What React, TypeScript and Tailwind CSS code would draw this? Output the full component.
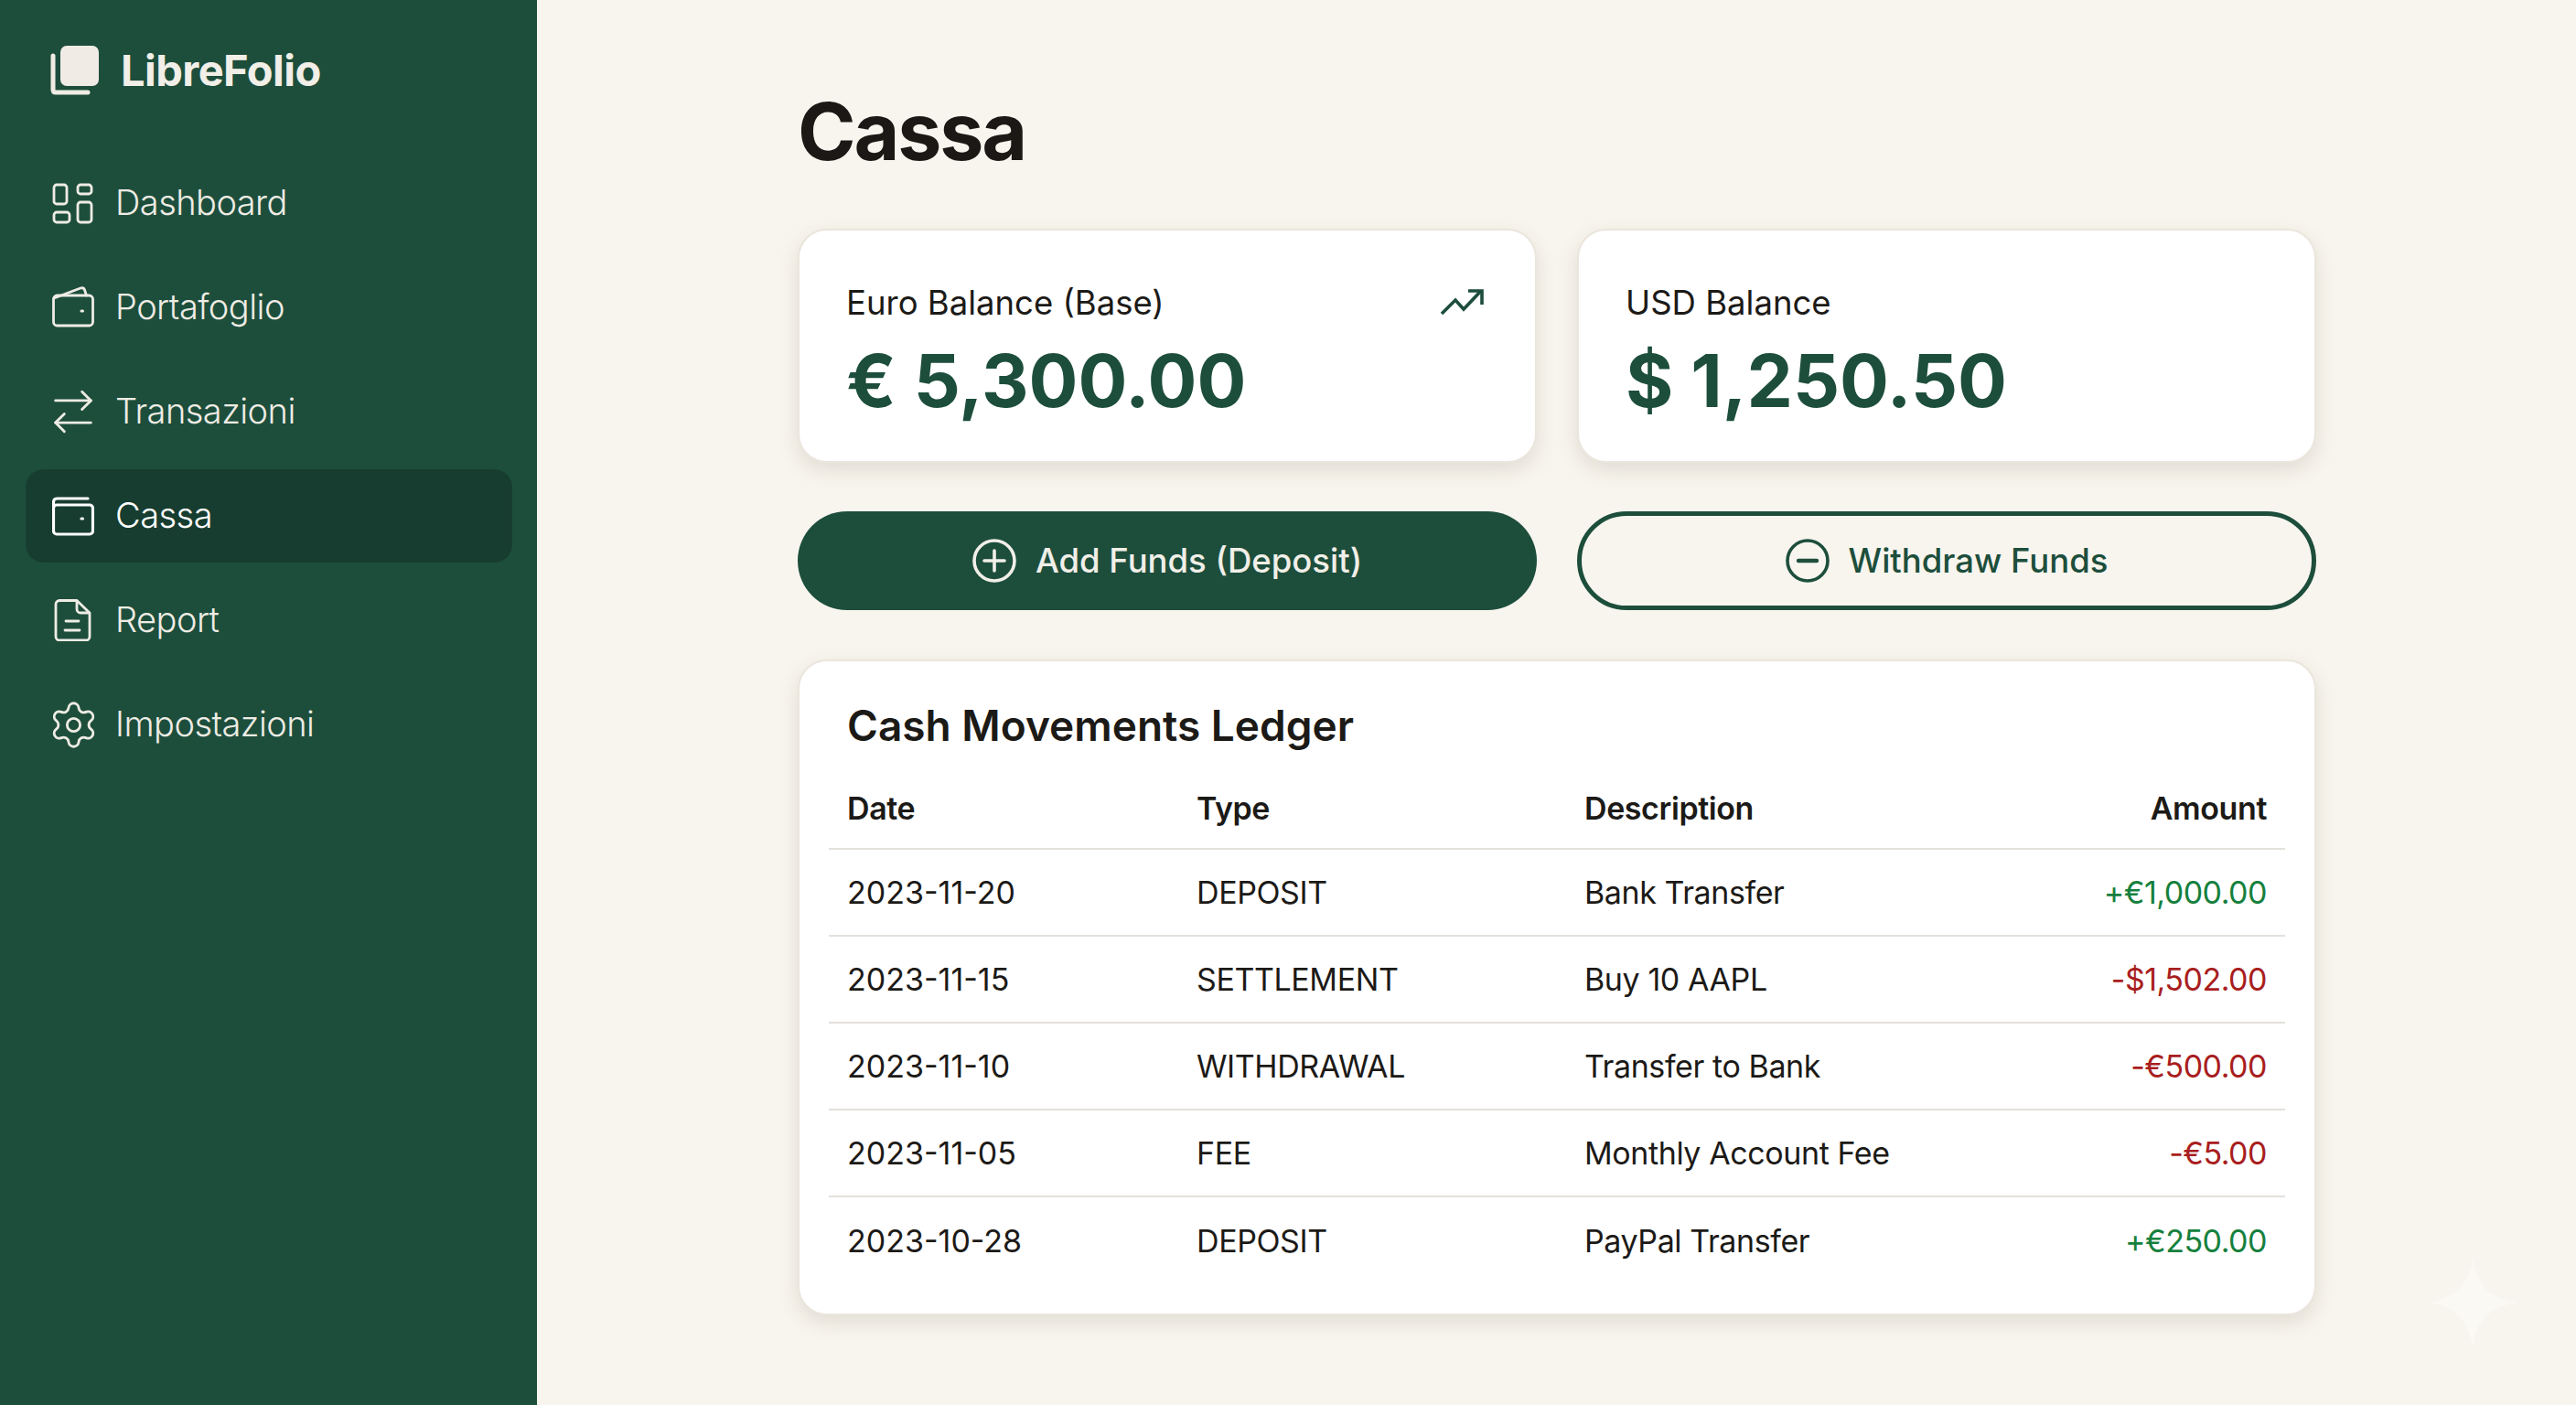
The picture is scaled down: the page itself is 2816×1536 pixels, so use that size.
import React from 'react';
import { ArrowRightLeft, Settings } from 'lucide-react';

const stroke = { fill: 'none', stroke: 'currentColor', strokeLinecap: 'round', strokeLinejoin: 'round' } as const;

function DashboardIcon() {
  return (
    <svg width="46" height="46" viewBox="0 0 46 46" {...stroke} strokeWidth="2.8">
      <rect x="2" y="3" width="14" height="21" rx="3" />
      <rect x="28" y="3" width="15" height="10" rx="3" />
      <rect x="2" y="33" width="17" height="11" rx="3" />
      <rect x="28" y="22" width="15" height="22" rx="3" />
    </svg>
  );
}

function WalletIcon() {
  return (
    <svg width="46" height="46" viewBox="0 0 46 46" {...stroke} strokeWidth="2.8">
      <rect x="1.5" y="10" width="43" height="33" rx="4" />
      <path d="M2 13 L31 2 Q34.5 1 35.5 4 L37.5 10" />
      <path d="M32 27h1.5" strokeWidth="3" />
    </svg>
  );
}

function CashIcon() {
  return (
    <svg width="46" height="46" viewBox="0 0 46 46" {...stroke} strokeWidth="3.2">
      <rect x="1.5" y="11" width="43" height="32" rx="3.5" />
      <path d="M1.5 14 V8 Q1.5 4 6 4 H39" />
      <path d="M32 26h1.5" />
    </svg>
  );
}

function ReportIcon() {
  return (
    <svg width="46" height="46" viewBox="0 0 46 46" {...stroke} strokeWidth="2.8">
      <path d="M8 1.5 H27 L41 15 V41 a4 4 0 0 1 -4 4 H8 a4 4 0 0 1 -4 -4 V5.5 a4 4 0 0 1 4 -4z" />
      <path d="M27 2 V11 a4 4 0 0 0 4 4 H40" />
      <path d="M15 24 H29" />
      <path d="M14 34 H30" />
    </svg>
  );
}

function LogoMark() {
  return (
    <svg width="54" height="54" viewBox="0 0 54 54">
      <path d="M3 11 V48 Q3 51 6 51 H41" fill="none" stroke="#f0ece4" strokeWidth="5" strokeLinecap="round" />
      <rect x="11" y="0" width="42" height="44" rx="7" fill="#f1ebe5" />
    </svg>
  );
}

function TrendIcon() {
  return (
    <svg width="52" height="34" viewBox="0 0 52 34" {...stroke} strokeWidth="3.6" strokeLinecap="butt" strokeLinejoin="miter" className="mr-[3px] text-[#1d4e3c]">
      <path d="M4 29 L19 14 L28 24 L47 4" />
      <path d="M33 4 H48 V19" />
    </svg>
  );
}

function PlusCircle() {
  return (
    <svg width="48" height="48" viewBox="0 0 48 48" {...stroke} strokeWidth="3.6">
      <circle cx="24" cy="24" r="22" />
      <path d="M13 24H35M24 13V35" />
    </svg>
  );
}

function MinusCircle() {
  return (
    <svg width="48" height="48" viewBox="0 0 48 48" {...stroke} strokeWidth="3.6">
      <circle cx="24" cy="24" r="22" />
      <path d="M14 24H34" strokeWidth="4.4" />
    </svg>
  );
}

const navItems = [
  { label: 'Dashboard', icon: <DashboardIcon /> },
  { label: 'Portafoglio', icon: <WalletIcon /> },
  { label: 'Transazioni', icon: <ArrowRightLeft size={58} strokeWidth={1.2} className="shrink-0" /> },
  { label: 'Cassa', icon: <CashIcon />, active: true },
  { label: 'Report', icon: <ReportIcon /> },
  { label: 'Impostazioni', icon: <Settings size={57} strokeWidth={1.2} className="shrink-0" /> },
];

const movements = [
  { date: '2023-11-20', type: 'DEPOSIT', description: 'Bank Transfer', amount: '+€1,000.00', positive: true },
  { date: '2023-11-15', type: 'SETTLEMENT', description: 'Buy 10 AAPL', amount: '-$1,502.00', positive: false },
  { date: '2023-11-10', type: 'WITHDRAWAL', description: 'Transfer to Bank', amount: '-€500.00', positive: false },
  { date: '2023-11-05', type: 'FEE', description: 'Monthly Account Fee', amount: '-€5.00', positive: false },
  { date: '2023-10-28', type: 'DEPOSIT', description: 'PayPal Transfer', amount: '+€250.00', positive: true },
];

export default function App() {
  return (
    <div className="relative flex h-[1536px] w-[2816px] overflow-hidden bg-[#f8f5ee] [font-family:Inter,sans-serif] text-[#1c1a17]">
      {/* Sidebar */}
      <aside className="w-[587px] shrink-0 bg-[#1d4e3c] pt-[50px] text-[#eeece4]">
        <div className="flex h-[54px] items-center gap-[23px] pl-[55px]">
          <LogoMark />
          <span className="pb-[2px] text-[47px] leading-none font-bold tracking-[-0.012em] text-[#f1efe8]">LibreFolio</span>
        </div>
        <nav className="mt-[67px] flex flex-col gap-[12px] pr-[27px] pl-[28px]">
          {navItems.map((item) => (
            <div
              key={item.label}
              className={`flex h-[102px] items-center gap-[23px] rounded-[20px] pl-[29px] ${
                item.active ? 'bg-[#173d30] text-white' : ''
              }`}
            >
              <span className="flex h-[46px] w-[46px] shrink-0 items-center justify-center">{item.icon}</span>
              <span className="pb-[2px] text-[38px] leading-none font-light tracking-[-0.014em]">{item.label}</span>
            </div>
          ))}
        </nav>
      </aside>

      {/* Main */}
      <main className="ml-[285px] w-[1660px] pt-[101px]">
        <h1 className="mb-[63px] text-[86px] leading-none font-bold tracking-[-0.025em] text-[#1c1815]">Cassa</h1>

        <div className="grid grid-cols-2 gap-x-[44px] gap-y-[53px]">
          <div className="h-[256px] rounded-[32px] border-2 border-[#ebe6dd] bg-white px-[51px] pt-[56px] shadow-[0_8px_22px_rgba(70,60,40,0.13)]">
            <div className="flex h-[46px] items-center justify-between">
              <span className="text-[36.5px] leading-[46px]">Euro Balance (Base)</span>
              <TrendIcon />
            </div>
            <div className="mt-[12px] text-[80px] leading-[100px] font-bold text-[#1d4e3c]">€ 5,300.00</div>
          </div>
          <div className="h-[256px] rounded-[32px] border-2 border-[#ebe6dd] bg-white px-[51px] pt-[56px] shadow-[0_8px_22px_rgba(70,60,40,0.13)]">
            <div className="flex h-[46px] items-center">
              <span className="text-[36.5px] leading-[46px]">USD Balance</span>
            </div>
            <div className="mt-[12px] text-[80px] leading-[100px] font-bold text-[#1d4e3c]">$ 1,250.50</div>
          </div>

          <button className="flex h-[108px] items-center justify-center gap-[21px] rounded-full bg-[#1d4e3c] text-[36.5px] font-medium text-[#f1efe8]">
            <PlusCircle />
            Add Funds (Deposit)
          </button>
          <button className="flex h-[108px] items-center justify-center gap-[21px] rounded-full border-[5px] border-[#1d4e3c] text-[36.5px] font-medium text-[#1d4e3c]">
            <MinusCircle />
            Withdraw Funds
          </button>
        </div>

        {/* Ledger */}
        <section className="mt-[54px] h-[717px] rounded-[32px] border-2 border-[#ebe6dd] bg-white px-[32px] pt-[40px] shadow-[0_8px_22px_rgba(70,60,40,0.13)]">
          <h2 className="px-[20px] text-[46px] leading-[60px] font-semibold">Cash Movements Ledger</h2>
          <table className="mt-[17px] w-full table-fixed border-collapse text-[34px] tracking-[-0.012em]">
            <thead>
              <tr className="h-[88px] border-b-2 border-[#e4e1dc] text-left">
                <th className="w-[382px] px-[20px] font-semibold">Date</th>
                <th className="w-[424px] px-[20px] font-semibold">Type</th>
                <th className="px-[20px] font-semibold">Description</th>
                <th className="w-[320px] px-[20px] text-right font-semibold">Amount</th>
              </tr>
            </thead>
            <tbody>
              {movements.map((row) => (
                <tr key={row.date} className="h-[95px] border-b-2 border-[#e4e1dc] last:border-b-0">
                  <td className="px-[20px] tracking-normal">{row.date}</td>
                  <td className="px-[20px]">{row.type}</td>
                  <td className="px-[20px]">{row.description}</td>
                  <td className={`px-[20px] text-right tracking-[-0.015em] ${row.positive ? 'text-[#15803d]' : 'text-[#a81e1e]'}`}>
                    {row.amount}
                  </td>
                </tr>
              ))}
            </tbody>
          </table>
        </section>
      </main>

      {/* Watermark star */}
      <svg className="absolute top-[1374px] left-[2653px]" width="100" height="100" viewBox="0 0 100 100">
        <path d="M50 0 C53 30 70 47 100 50 C70 53 53 70 50 100 C47 70 30 53 0 50 C30 47 47 30 50 0Z" fill="#fbf9f4" />
      </svg>
    </div>
  );
}
